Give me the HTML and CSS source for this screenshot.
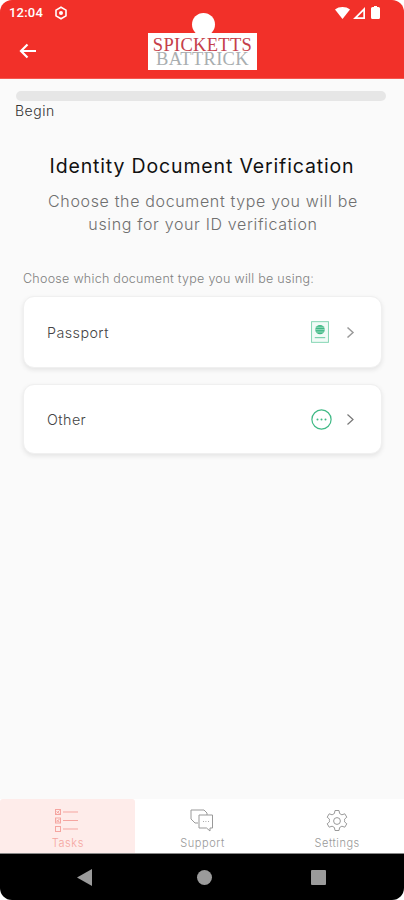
FILE: index.html
```html
<!DOCTYPE html>
<html lang="en">
<head>
<meta charset="utf-8">
<title>Identity Document Verification</title>
<link rel="stylesheet" href="styles.css">
</head>
<body>
<div class="screen">
  <header class="top">
    <div class="status">
      <div class="status-left">
        <span class="time">12:04</span>
        <svg class="status-gear" width="14" height="14" viewBox="0 0 14 14"><path d="M7 1.200l5 2.900v5.800l-5 2.900-5-2.900V4.100z" fill="none" stroke="#fff" stroke-width="1.600"/><circle cx="7" cy="7" r="2" fill="#fff"/></svg>
      </div>
      <div class="status-right">
        <svg width="15" height="12" viewBox="0 0 15 12"><path d="M0 2.500C4-.8 11-.8 15 2.500L7.500 12z" fill="#fff"/></svg>
        <svg width="12" height="12" viewBox="0 0 12 12"><path d="M12 0v12H0zM10.300 4.200L4.300 10.300h6z" fill="#fff" fill-rule="evenodd"/></svg>
        <svg class="battery" width="9" height="13" viewBox="0 0 9 13"><path d="M3 0h3v1h1.500A1.500 1.500 0 0 1 9 2.500V11.500A1.500 1.500 0 0 1 7.500 13h-6A1.500 1.500 0 0 1 0 11.500V2.500A1.500 1.500 0 0 1 1.500 1H3z" fill="#fff"/></svg>
      </div>
    </div>
    <div class="appbar">
      <svg class="back" width="18" height="16" viewBox="0 0 18 16"><path d="M17 8H2.500M8.500 1.500L2 8l6.500 6.500" fill="none" stroke="#fff" stroke-width="2.200"/></svg>
      <div class="logo">
        <span class="logo-dot"></span>
        <span class="logo-a">SPICKETTS</span>
        <span class="logo-b">BATTRICK</span>
      </div>
    </div>
  </header>

  <main class="content">
    <div class="progress"></div>
    <div class="step">Begin</div>
    <h1 class="title">Identity Document Verification</h1>
    <p class="subtitle">Choose the document type you will be using for your ID verification</p>
    <p class="label">Choose which document type you will be using:</p>
    <div class="cards">
      <div class="card card-tall">
        <span class="card-text">Passport</span>
        <svg class="card-icon icon-passport" width="18" height="22" viewBox="0 0 19 23"><rect x=".6" y=".6" width="17.800" height="21.800" fill="#f2fbf7" stroke="#7fd4b0" stroke-width="1"/><circle cx="9.500" cy="9" r="5" fill="#3fb985"/><path d="M4.500 9h10M5.500 6.500h8M5.500 11.500h8" stroke="#c5ecdb" stroke-width=".7"/><path d="M4 17.500h11" stroke="#5cc79b" stroke-width="1"/></svg>
        <svg class="chev" width="9" height="13" viewBox="0 0 9 13"><path d="M1.500 1.500l5.500 5-5.500 5" fill="none" stroke="#9a9a9a" stroke-width="1.500"/></svg>
      </div>
      <div class="card">
        <span class="card-text">Other</span>
        <svg class="card-icon icon-other" width="21" height="21" viewBox="0 0 21 21"><circle cx="10.500" cy="10.500" r="9.600" fill="none" stroke="#3fb985" stroke-width="1.200"/><circle cx="6.500" cy="10.500" r="1" fill="#3fb985"/><circle cx="10.500" cy="10.500" r="1" fill="#3fb985"/><circle cx="14.500" cy="10.500" r="1" fill="#3fb985"/></svg>
        <svg class="chev" width="9" height="13" viewBox="0 0 9 13"><path d="M1.500 1.500l5.500 5-5.500 5" fill="none" stroke="#777" stroke-width="1.200"/></svg>
      </div>
    </div>
  </main>

  <nav class="tabs">
    <div class="tab tab-active">
      <svg width="24" height="24" viewBox="0 0 24 24" fill="none" stroke="#f5a5a0" stroke-width="1"><rect x=".5" y=".5" width="5" height="5"/><rect x=".5" y="9" width="5" height="5"/><rect x=".5" y="17.500" width="5" height="5"/><path d="M1.500 2.500l3 2M4.500 1.500l-3 3M1.500 11l3 2M4.500 10l-3 3M8 3h15M8 11.500h15M8 20h15"/></svg>
      <span class="tab-text tab-tasks">Tasks</span>
    </div>
    <div class="tab">
      <svg width="24" height="24" viewBox="0 0 24 24" fill="none" stroke="#999" stroke-width="1"><path d="M8 14H5L1 10V1h13l3 3v2"/><path d="M9 6h13.500v13H20v3l-3.500-3H9z" fill="#fff"/><path d="M13 12.500h.8M15.500 12.500h.8M18 12.500h.8"/></svg>
      <span class="tab-text">Support</span>
    </div>
    <div class="tab">
      <svg width="24" height="24" viewBox="0 0 24 24" fill="none" stroke="#999" stroke-width="1"><path d="M10 1.500h4l.6 3 2.300 1.300 2.900-1 2 3.400-2.300 2a7 7 0 0 1 0 2.600l2.300 2-2 3.400-2.900-1-2.300 1.300-.6 3h-4l-.6-3-2.300-1.300-2.900 1-2-3.400 2.300-2a7 7 0 0 1 0-2.600l-2.300-2 2-3.400 2.900 1 2.300-1.300z"/><circle cx="12" cy="12" r="3.400"/></svg>
      <span class="tab-text">Settings</span>
    </div>
  </nav>

  <div class="sysnav">
    <svg width="16" height="17" viewBox="0 0 16 17"><path d="M15 0v17L0 8.500z" fill="#9b9b9b"/></svg>
    <span class="sys-home"></span>
    <span class="sys-recent"></span>
  </div>
</div>
</body>
</html>
```

FILE: styles.css
```css
* { box-sizing: border-box; }
html, body { margin: 0; padding: 0; background: #fff; }
body { width: 404px; height: 900px; overflow: hidden; font-family: Inter, "Noto Sans", sans-serif; }

.screen {
  width: 404px;
  height: 900px;
  display: flex;
  flex-direction: column;
  border-radius: 12px;
  overflow: hidden;
  background: #fafafa;
}

.top { height: 79px; background: #f23029; border-bottom: 1px solid #f5574f; flex: none; }
.status { height: 24px; display: flex; justify-content: space-between; align-items: center; padding: 1px 24px 0 9px; color: #fff; }
.status-left { display: flex; align-items: center; gap: 11px; }
.time { font: 500 13px Roboto, sans-serif; letter-spacing: .2px; }
.status-right { display: flex; align-items: center; gap: 3px; }
.battery { margin-left: 3px; }

.appbar { height: 54px; display: flex; align-items: center; padding: 0 0 0 19px; }
.logo {
  position: relative;
  margin: 0 0 0 111px;
  width: 109px;
  height: 37px;
  background: #fff;
  display: flex;
  flex-direction: column;
  align-items: center;
  font-family: "Liberation Serif", serif;
  font-size: 18.500px;
  line-height: 14.500px;
  padding-top: 5px;
}
.logo-dot { position: absolute; left: 44px; top: -20px; width: 23px; height: 23px; border-radius: 50%; background: #fff; }
.logo-a { color: #c5404a; letter-spacing: .3px; }
.logo-b { color: #a9aeb0; letter-spacing: .3px; }

.content { flex: 1; padding: 12px 16px 0; display: flex; flex-direction: column; }
.progress { height: 10px; border-radius: 5px; background: #e6e6e6; margin-right: 2px; flex: none; }
.step { font-size: 14px; font-weight: 300; line-height: 18px; margin-top: 1px; color: #333; margin-left: -1px; letter-spacing: .5px; }
.title { margin: 33px 0 0; text-align: center; font-size: 19.500px; line-height: 26px; font-weight: 400; color: #111; letter-spacing: .85px; white-space: nowrap; }
.subtitle { margin: 11px 13px 0 15px; text-align: center; font-size: 16px; line-height: 23px; font-weight: 300; color: #6f6f6f; letter-spacing: .65px; }
.label { margin: 34px 0 0 7px; font-size: 12.500px; line-height: 18px; font-weight: 300; color: #808080; letter-spacing: .27px; }
.cards { margin: 8px 6px 0 7px; display: flex; flex-direction: column; gap: 16px; }
.card {
  height: 70px;
  background: #fff;
  border-radius: 11px;
  border: 1px solid #f0f0f0;
  box-shadow: 0 2px 5px rgba(0,0,0,.09);
  display: flex;
  align-items: center;
  padding: 0 26px 0 23px;
}
.card-tall { height: 72px; }
.card-text { flex: 1; font-size: 14.300px; font-weight: 300; color: #444; letter-spacing: .45px; }
.icon-passport { margin-right: 17px; }
.icon-other { margin-right: 14px; }

.tabs { height: 55px; background: #fff; display: grid; grid-template-columns: repeat(3, 1fr); flex: none; border-bottom: 1px solid #888; }
.tab { display: flex; flex-direction: column; align-items: center; padding-top: 10px; gap: 3px; }
.tab-text { font-size: 11px; line-height: 14px; font-weight: 300; color: #999; letter-spacing: .55px; padding-left: 1px; }
.tab-active { background: #feecea; border-radius: 3px 3px 0 0; }
.tab-tasks { color: #f5a5a0; }

.sysnav { height: 46px; flex: none; background: #000; display: flex; align-items: center; justify-content: space-between; padding: 0 77px; }
.sys-home { width: 15px; height: 15px; border-radius: 50%; background: #9b9b9b; margin-left: 4px; }
.sys-recent { width: 15px; height: 15px; border-radius: 1px; background: #9b9b9b; margin-right: 1px; }
```
